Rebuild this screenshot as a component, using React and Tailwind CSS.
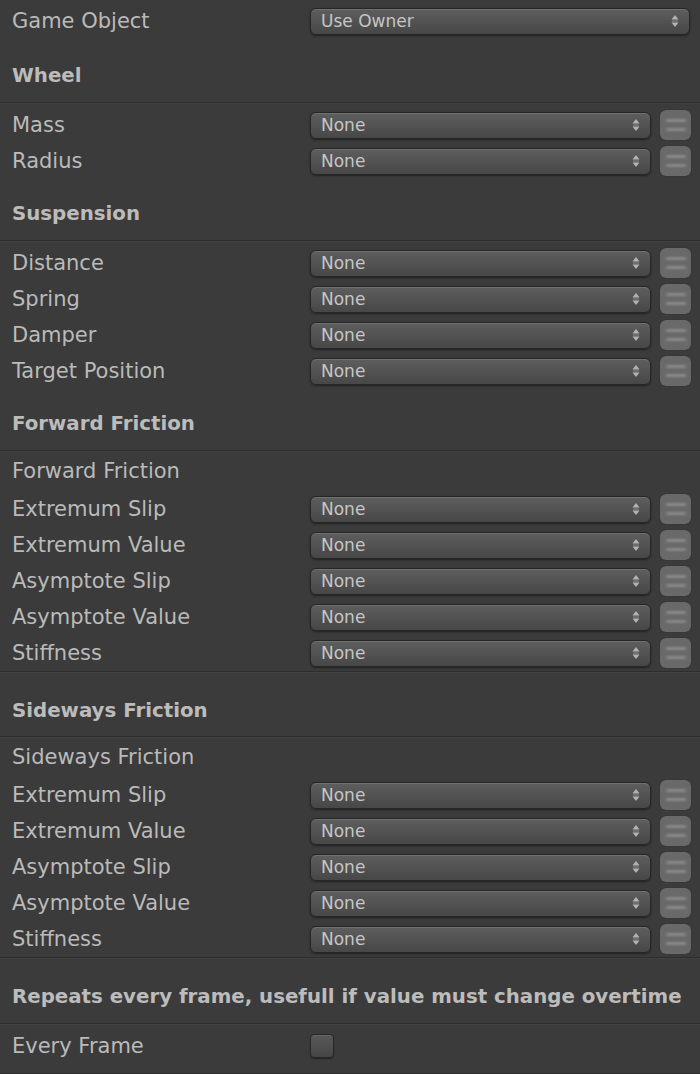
import React from "react";

const font = { fontFamily: '"DejaVu Sans", Verdana, sans-serif' };

function Arrows() {
  return (
    <svg width="8" height="14" viewBox="0 0 8 14" className="shrink-0">
      <polygon points="0.5,5.5 4,1 7.5,5.5" fill="#b4b4b4" />
      <rect x="1" y="6.5" width="6" height="1" fill="#8a8a8a" />
      <polygon points="0.5,8.5 4,13 7.5,8.5" fill="#b4b4b4" />
    </svg>
  );
}

function Dropdown({ value = "None", wide = false }) {
  return (
    <div
      className={`flex h-[27px] items-center justify-between rounded-[6px] border border-[#262626] bg-gradient-to-b from-[#5e5e5e] to-[#474747] pl-[10px] pr-[10px] shadow-[inset_0_1px_0_rgba(255,255,255,0.12),0_1px_2px_rgba(0,0,0,0.45)] ${
        wide ? "w-[380px]" : "w-[341px]"
      }`}
    >
      <span className="text-[17px] leading-[20px] text-[#c6c6c6]">{value}</span>
      <Arrows />
    </div>
  );
}

function MenuButton() {
  return (
    <div className="ml-[9px] flex h-[30px] w-[31px] flex-col items-center justify-center gap-[6px] rounded-[6px] bg-[#696969] shadow-[0_0_1px_rgba(0,0,0,0.5)]">
      <div className="h-[3px] w-[20px] rounded-full bg-[#8a8a8a] blur-[0.8px]" />
      <div className="h-[3px] w-[20px] rounded-full bg-[#8a8a8a] blur-[0.8px]" />
    </div>
  );
}

function Label({ children }) {
  return (
    <div className="w-[310px] shrink-0 pl-[12px] text-[21px] leading-[24px] text-[#bababa]">
      {children}
    </div>
  );
}

function Row({ label }) {
  return (
    <div className="flex h-[36px] items-center">
      <Label>{label}</Label>
      <Dropdown />
      <MenuButton />
    </div>
  );
}

function Header({ children, h = "h-[61px]" }) {
  return (
    <div className={`${h} pt-[25px] pl-[12px]`}>
      <div className="text-[19.8px] font-bold leading-[20px] text-[#bcbcbc]">{children}</div>
    </div>
  );
}

function Sep() {
  return (
    <div>
      <div className="h-px bg-[#2d2d2d]" />
      <div className="h-px bg-[#424242]" />
    </div>
  );
}

function LabelRow({ children }) {
  return (
    <div className="flex h-[38px] items-center pb-[2px]">
      <Label>{children}</Label>
    </div>
  );
}

const friction = ["Extremum Slip", "Extremum Value", "Asymptote Slip", "Asymptote Value", "Stiffness"];

export default function App() {
  return (
    <div className="h-[1074px] w-[700px] overflow-hidden bg-[#3b3b3b]" style={font}>
      <div className="pt-[3px]">
        <div className="flex h-[38px] items-center pb-[2px]">
          <Label>Game Object</Label>
          <Dropdown value="Use Owner" wide />
        </div>
      </div>

      <Header>Wheel</Header>
      <Sep />
      <div className="pt-[3px]">
        <Row label="Mass" />
        <Row label="Radius" />
      </div>

      <Header>Suspension</Header>
      <Sep />
      <div className="pt-[3px]">
        <Row label="Distance" />
        <Row label="Spring" />
        <Row label="Damper" />
        <Row label="Target Position" />
      </div>

      <Header>Forward Friction</Header>
      <Sep />
      <div className="pt-[1px]">
        <LabelRow>Forward Friction</LabelRow>
        {friction.map((l) => (
          <Row key={"f" + l} label={l} />
        ))}
      </div>
      <Sep />

      <div className="pt-[3px]">
        <Header h="h-[60px]">Sideways Friction</Header>
      </div>
      <Sep />
      <div className="pt-[1px]">
        <LabelRow>Sideways Friction</LabelRow>
        {friction.map((l) => (
          <Row key={"s" + l} label={l} />
        ))}
      </div>
      <Sep />

      <div className="pt-[3px]">
        <Header>Repeats every frame, usefull if value must change overtime</Header>
      </div>
      <Sep />
      <div className="flex h-[40px] items-center pt-[2px]">
        <Label>Every Frame</Label>
        <div className="h-[24px] w-[24px] rounded-[4px] border border-[#262626] bg-gradient-to-b from-[#585858] to-[#464646] shadow-[inset_0_1px_0_rgba(255,255,255,0.1),0_1px_1px_rgba(0,0,0,0.4)]" />
      </div>
      <div className="h-[8px]" />
      <Sep />
    </div>
  );
}
